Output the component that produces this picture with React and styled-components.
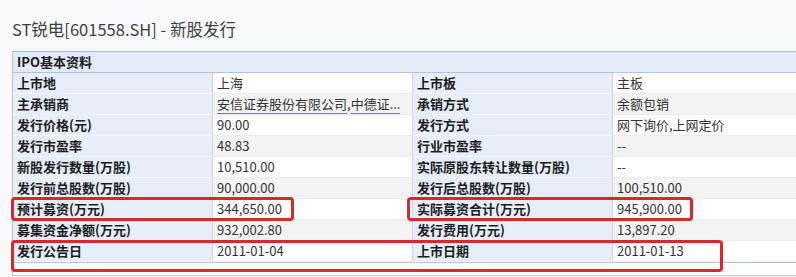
import styled, { createGlobalStyle } from 'styled-components';

const GlobalStyle = createGlobalStyle`
  html, body {
    margin: 0;
    padding: 0;
    background: #f9fafd;
    overflow: hidden;
  }
  body {
    font-family: "Noto Sans CJK SC", "Noto Sans", "Liberation Sans", sans-serif;
  }
`;

const Page = styled.div`
  position: relative;
  width: 796px;
  height: 277px;
  overflow: hidden;
`;

const Title = styled.h1`
  margin: 0;
  padding: 18px 0 0 12px;
  height: 51px;
  box-sizing: border-box;
  font-size: 16.5px;
  font-weight: 400;
  line-height: 22px;
  color: #3f3f3f;
  white-space: nowrap;
`;

const Table = styled.div`
  margin-left: 12px;
  width: 820px;
  display: grid;
  grid-template-columns: 200px 200px 200px 1fr;
  border-top: 1px solid #a9b9cd;
  border-left: 1px solid #b3c3d6;
`;

const Caption = styled.div`
  grid-column: 1 / -1;
  height: 20px;
  line-height: 20px;
  padding-left: 4px;
  background: #e2ebf6;
  border-bottom: 1px solid #b4c4d8;
  font-size: 13px;
  font-weight: 700;
  color: #222;
`;

const Cell = styled.div`
  height: 20px;
  line-height: 20px;
  padding-left: 4px;
  font-size: 13px;
  white-space: nowrap;
  overflow: hidden;
  box-sizing: content-box;
  border-right: 1px solid #c9d5e3;
  border-bottom: 1px solid ${(p) => (p.$label ? '#f4f7fb' : '#e9ecf0')};
  background: ${(p) => (p.$label ? '#e6eef9' : p.$odd ? '#f3f3f4' : '#ffffff')};
  font-weight: ${(p) => (p.$label ? 700 : 400)};
  color: ${(p) => (p.$label ? '#1d1d1d' : '#333')};
`;

const Link = styled.span`
  border-bottom: 1px solid #2e9a9c;
`;

const Spacer = styled.div`
  grid-column: 1 / -1;
  height: 12px;
  background: #fbfcfe;
  border-top: 1px solid #b9c7d8;
  border-bottom: 1px solid #c4ccd6;
`;

const Mark = styled.div`
  position: absolute;
  border: 3px solid #d9282c;
  border-radius: 4px;
  box-sizing: border-box;
`;

const rows = [
  ['上市地', '上海', '上市板', '主板'],
  ['主承销商', null, '承销方式', '余额包销'],
  ['发行价格(元)', '90.00', '发行方式', '网下询价,上网定价'],
  ['发行市盈率', '48.83', '行业市盈率', '--'],
  ['新股发行数量(万股)', '10,510.00', '实际原股东转让数量(万股)', '--'],
  ['发行前总股数(万股)', '90,000.00', '发行后总股数(万股)', '100,510.00'],
  ['预计募资(万元)', '344,650.00', '实际募资合计(万元)', '945,900.00'],
  ['募集资金净额(万元)', '932,002.80', '发行费用(万元)', '13,897.20'],
  ['发行公告日', '2011-01-04', '上市日期', '2011-01-13'],
];

const Underwriters = () => (
  <>
    <Link>安信证券股份有限公司</Link>,<Link>中德证...</Link>
  </>
);

export default function App() {
  return (
    <>
      <GlobalStyle />
      <Page>
        <Title>ST锐电[601558.SH] - 新股发行</Title>
        <Table>
          <Caption>IPO基本资料</Caption>
          {rows.map(([l1, v1, l2, v2], i) => (
            <div key={l1} style={{ display: 'contents' }}>
              <Cell $label>{l1}</Cell>
              <Cell $odd={i % 2 === 1}>{v1 ?? <Underwriters />}</Cell>
              <Cell $label>{l2}</Cell>
              <Cell $odd={i % 2 === 1}>{v2}</Cell>
            </div>
          ))}
          <Spacer />
        </Table>
        <Mark style={{ left: 11, top: 197, width: 283, height: 24 }} />
        <Mark style={{ left: 407, top: 197, width: 286, height: 24 }} />
        <Mark style={{ left: 11, top: 240, width: 712, height: 32 }} />
      </Page>
    </>
  );
}
